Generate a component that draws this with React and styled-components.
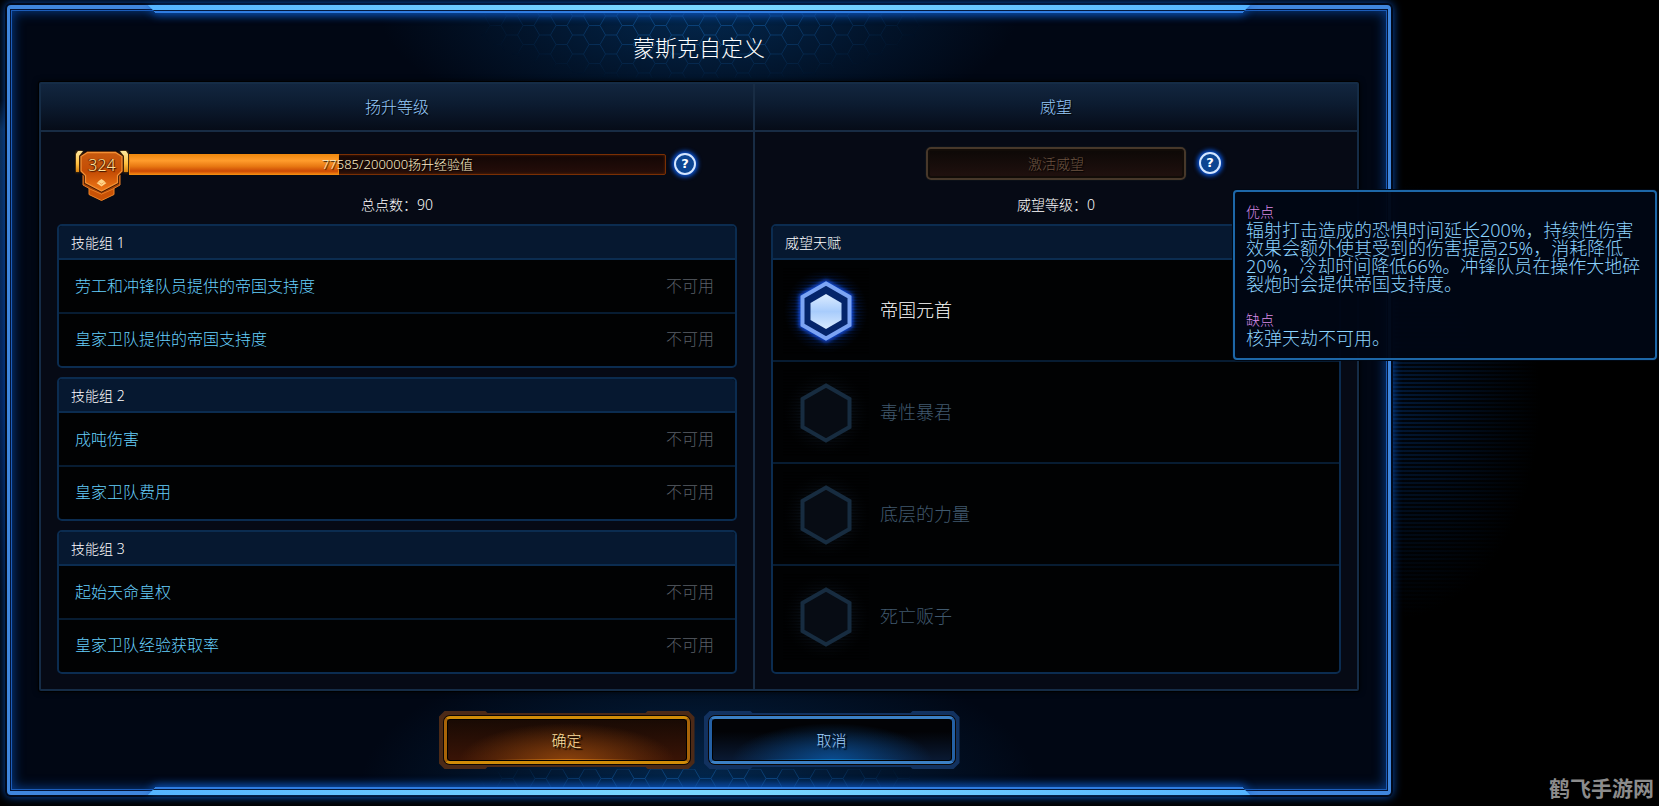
import React from 'react';
import styled, { createGlobalStyle, css } from 'styled-components';

const GlobalStyle = createGlobalStyle`
* {
  box-sizing: border-box;
}
body {
  margin: 0;
  background: #000;
  font-family: "Noto Sans", "Noto Sans CJK SC", sans-serif;
  font-weight: 300;
  color: #fff;
}
h1, h2, h3, p, ul {
  margin: 0;
  padding: 0;
  font-weight: 300;
}
button {
  font-family: inherit;
  font-weight: inherit;
  cursor: pointer;
}
`;

const Page = styled.div`
position: relative;
min-height: 100vh;
padding: 5px 268px 11px 7px;
overflow: hidden;
background:
  linear-gradient(180deg, transparent 100px, rgba(18, 62, 110, 0.7) 130px, rgba(4, 30, 80, 0.9) 400px, transparent 600px) 0 0 / 7px 100% no-repeat,
  repeating-linear-gradient(180deg, rgba(0, 0, 0, 0.8) 0 2px, transparent 2px 4px),
  radial-gradient(ellipse 150px 220px at 1390px 400px, #021a3a, #000 100%);
`;

const Dialog = styled.main`
position: relative;
border: 3px solid #3f86dd;
border-width: 4px 3px;
border-radius: 4px;
background:
  radial-gradient(ellipse 320px 130px at 50% 0, #03284f, rgba(2, 24, 50, 0.7) 60%, transparent),
  radial-gradient(ellipse 340px 150px at 50% 100%, #03284f, rgba(2, 24, 50, 0.7) 60%, transparent),
  #010714;
box-shadow:
  0 0 0 2px #010a1c,
  0 0 10px 2px #0648a8,
  inset 0 0 0 1px #031436,
  inset 0 0 0 2px #1c5cb8,
  inset 0 0 12px 3px #063a86;
`;

const Rail = styled.div`
position: absolute;
left: 10%;
right: 10%;
${({ $bottom }) => ($bottom ? 'bottom: -4px; transform: scaleY(-1);' : 'top: -4px;')}
height: 8px;
filter: drop-shadow(0 2px 4px #0a50b4);

&::before {
  content: '';
  display: block;
  height: 8px;
  background:
    linear-gradient(180deg, transparent 5px, #04183c 5px 6px, #2f7ce0 6px),
    linear-gradient(90deg, #54b4ff, #78d6ff 45%, #78d6ff 55%, #54b4ff);
  clip-path: polygon(0 0, 100% 0, calc(100% - 8px) 100%, 8px 100%);
}
`;

const HexField = styled.svg`
position: absolute;
left: 50%;
margin-left: -231px;
width: 462px;
height: ${({ $bottom }) => ($bottom ? '20px' : '66px')};
${({ $bottom }) => ($bottom ? 'bottom: 2px;' : 'top: 3px;')}
mask-image: ${({ $bottom }) => ($bottom
    ? 'radial-gradient(ellipse 50% 200% at 50% 100%, rgba(0, 0, 0, 0.8) 40%, transparent)'
    : 'radial-gradient(ellipse 50% 110% at 50% 0, rgba(0, 0, 0, 0.8) 30%, transparent)')};
`;

const Title = styled.h1`
position: relative;
height: 73px;
display: flex;
justify-content: center;
align-items: center;
font-size: 22px;
color: #fff;
`;

const Panel = styled.div`
position: relative;
display: grid;
grid-template-columns: 712fr 604fr;
margin: 0 29px;
border: 2px solid #152c46;
border-radius: 2px;
background: #060a15;
box-shadow: 0 0 0 1px #000, 0 0 6px #000;
`;

const Column = styled.section`
padding-bottom: 15px;

& + & {
  border-left: 2px solid #182c44;
}
`;

const ColumnTitle = styled.h2`
height: 48px;
padding-bottom: 2px;
display: flex;
justify-content: center;
align-items: center;
border-bottom: 2px solid #182c44;
background: linear-gradient(180deg, #12263f, #0c1b30 45%, #060c18);
font-size: 16px;
color: #94c8f8;
text-shadow: 1px 1px 1px #000;
`;

const LevelRow = styled.div`
display: flex;
align-items: center;
height: 64px;
padding: 0 57px 0 34px;
`;

const PrestigeRow = styled.div`
display: grid;
grid-template-columns: 1fr auto 1fr;
align-items: center;
gap: 13px;
height: 62px;
margin-bottom: 2px;
`;

const BadgeBox = styled.div`
display: grid;
align-self: flex-start;
flex: none;
width: 54px;
height: 52px;
margin-top: 18px;

> * {
  grid-area: 1 / 1;
}
`;

const BadgeLevel = styled.span`
position: relative;
font-size: 16px;
line-height: 30px;
text-align: center;
color: #ffe09a;
text-shadow: 1px 1px 1px #3a1200, -1px 0 1px #3a1200;
`;

const XpBar = styled.div`
position: relative;
flex: 1;
height: 21px;
margin-right: 8px;
border: 1px solid #7a2f04;
border-radius: 2px;
background: linear-gradient(180deg, #120605, #260e0a);
box-shadow: inset 0 0 3px #5a2204;
`;

const XpFill = styled.div`
height: 100%;
background: linear-gradient(180deg, #f08a10, #ff9c2c 30%, #e87812 60%, #cc4a04 85%, #f08010);
box-shadow: 0 0 0 1px #f08a10;
`;

const XpText = styled.span`
position: absolute;
inset: 0;
font-size: 13px;
line-height: 18px;
text-align: center;
color: #fff0c8;
text-shadow: 1px 1px 1px #000;
`;

const HelpButton = styled.button`
flex: none;
width: 22px;
height: 22px;
padding: 0;
border: 2px solid #d4e6ff;
border-radius: 50%;
background: #0c4592;
box-shadow: 0 0 4px 2px #0a55d8;
font-family: "DejaVu Sans", sans-serif;
font-size: 13px;
font-weight: 700;
line-height: 18px;
color: #fff;
`;

const PrestigeButton = styled.button`
grid-column: 2;
width: 260px;
height: 33px;
padding: 0;
border: 2px solid #47382a;
border-radius: 5px;
background: linear-gradient(180deg, #0c0806, #21110f);
box-shadow: 0 0 0 1px #0b1018, inset 0 0 0 2px #120c08;
font-size: 14px;
color: #6c5340;
text-shadow: 1px 1px 1px #000;
`;

const Points = styled.p`
margin-bottom: 10px;
font-size: 14px;
line-height: 18px;
text-align: center;
`;

const Groups = styled.div`
display: flex;
flex-direction: column;
gap: 9px;
padding: 0 16px;
`;

const Card = styled.div`
position: relative;
border: 2px solid #0b2c50;
border-radius: 5px;
background: #010203;
`;

const CardTitle = styled.h3`
height: 34px;
padding: 0 12px;
border-bottom: 2px solid #0b2c50;
border-radius: 3px 3px 0 0;
background: #061830;
font-size: 14px;
line-height: 34px;
`;

const SkillList = styled.ul`
list-style: none;
padding-bottom: 2px;
`;

const Skill = styled.li`
display: flex;
justify-content: space-between;
align-items: center;
height: 52px;
padding: 0 21px 2px 16px;
font-size: 16px;
color: #66d0fc;

& + & {
  border-top: 2px solid #071c32;
}
`;

const SkillState = styled.span`
color: #5a6068;
`;

const TalentList = styled.ul`
list-style: none;
padding-bottom: 6px;
`;

const Talent = styled.li`
display: flex;
align-items: center;
gap: 11px;
height: 102px;
padding: 2px 0 0 10px;
border-bottom: 2px solid #071c32;
font-size: 18px;
color: ${({ $active }) => ($active ? '#fff' : '#40596e')};

&:last-child {
  height: 100px;
  border-bottom: none;
}
`;

const TalentName = styled.span`
padding-bottom: 5px;
`;

const HexIcon = styled.svg`
flex: none;
width: 86px;
height: 86px;
`;

const Tooltip = styled.div`
position: absolute;
z-index: 5;
top: -36px;
right: -318px;
width: 424px;
height: 170px;
padding: 11px 7px 0 11px;
border: 2px solid #1d67a8;
border-radius: 4px;
background: rgba(0, 6, 20, 0.96);
box-shadow: 0 0 0 1px #000814;
font-size: 18px;
line-height: 18px;
color: #8cd4ff;

p + h4 {
  margin-top: 18px;
}
`;

const TooltipLabel = styled.h4`
margin: 0;
font-size: 14px;
font-weight: 300;
line-height: 18px;
color: #dc8ce8;
`;

const Actions = styled.div`
position: relative;
display: flex;
justify-content: center;
gap: 9px;
padding: 20px 0 22px;
`;

const blueSkin = css`
background: #123260;
color: #a0d0ff;

span {
  border-color: #3c80c4 #2460a4;
  background:
    linear-gradient(90deg, transparent 20%, #0a70b8 50%, transparent 80%) 0 100% / 100% 2px no-repeat,
    radial-gradient(ellipse 42% 90% at 50% 100%, #0a4c90, transparent),
    linear-gradient(180deg, #020306 30%, #0a1a34);
}
`;

const goldSkin = css`
background: #4c2a17;
color: #ffe0a0;

span {
  border-color: #d08c08 #a86408;
  background:
    linear-gradient(90deg, transparent 20%, #c87010 50%, transparent 80%) 0 100% / 100% 2px no-repeat,
    radial-gradient(ellipse 45% 90% at 50% 100%, #8a420c, transparent),
    linear-gradient(180deg, #180a04, #3a1406);
}
`;

const ActionButton = styled.button`
width: 256px;
height: 58px;
padding: 5px;
border: none;
font-size: 15px;
text-shadow: 2px 2px 1px #000;
clip-path: polygon(
  6px 0, 47px 0, 49px 2px, calc(100% - 49px) 2px, calc(100% - 47px) 0, calc(100% - 6px) 0,
  100% 6px, 100% calc(100% - 6px),
  calc(100% - 6px) 100%, calc(100% - 47px) 100%, calc(100% - 49px) calc(100% - 2px),
  49px calc(100% - 2px), 47px 100%, 6px 100%, 0 calc(100% - 6px), 0 6px
);

span {
  display: flex;
  justify-content: center;
  align-items: center;
  height: 100%;
  padding-bottom: 2px;
  border-width: 3px;
  border-style: solid;
  border-radius: 6px;
  box-shadow: 0 0 0 1px #0c0604, inset 0 0 0 1px #000;
}

${({ $primary }) => ($primary ? goldSkin : blueSkin)}
`;

const Watermark = styled.div`
position: absolute;
right: 5px;
bottom: 7px;
font-family: "Noto Sans CJK SC", sans-serif;
font-size: 21px;
font-weight: 700;
line-height: 24px;
color: #8c8c8c;
`;

const groups = [
  { name: '技能组 1', skills: ['劳工和冲锋队员提供的帝国支持度', '皇家卫队提供的帝国支持度'] },
  { name: '技能组 2', skills: ['成吨伤害', '皇家卫队费用'] },
  { name: '技能组 3', skills: ['起始天命皇权', '皇家卫队经验获取率'] },
];

const talents = ['帝国元首', '毒性暴君', '底层的力量', '死亡贩子'];

const xp = 77585;
const xpMax = 200000;

const HexPattern = ({ bottom }) => {
  const id = bottom ? 'hexBottom' : 'hexTop';
  return (
    <HexField $bottom={bottom} aria-hidden="true">
      <defs>
        <pattern id={id} width="33" height="19" patternUnits="userSpaceOnUse" x={bottom ? 12 : 0} y={bottom ? 0 : 4}>
          <path d="M0 9.5 5.5 0H16.5L22 9.5 16.5 19H5.5ZM22 9.5H33" fill="none" stroke="#0e4a86" strokeWidth="1" />
        </pattern>
      </defs>
      <rect width="100%" height="100%" fill={`url(#${id})`} />
    </HexField>
  );
};

const Badge = ({ level }) => (
  <BadgeBox>
    <svg width="54" height="52" viewBox="0 0 54 52" aria-hidden="true">
      <defs>
        <linearGradient id="wing" x1="0" y1="0" x2="0" y2="1">
          <stop offset="0" stopColor="#ffe9a0" />
          <stop offset="0.6" stopColor="#ffc040" />
          <stop offset="1" stopColor="#d88410" />
        </linearGradient>
        <linearGradient id="shield" x1="0" y1="0" x2="0" y2="1">
          <stop offset="0" stopColor="#c85a10" />
          <stop offset="0.5" stopColor="#c44c04" />
          <stop offset="1" stopColor="#f07818" />
        </linearGradient>
        <filter id="wingGlow" x="-50%" y="-50%" width="200%" height="200%">
          <feGaussianBlur stdDeviation="1.5" />
        </filter>
      </defs>
      <g fill="#b86a10" filter="url(#wingGlow)">
        <path d="M8 1H3L1 4V22H4V6Z" />
        <path d="M45 1H51L53 4V22H49V6Z" />
      </g>
      <path d="M8 1H3L1 4V22H4V6Z" fill="url(#wing)" />
      <path d="M45 1H51L53 4V22H49V6Z" fill="url(#wing)" />
      <path d="M14 38V44.500L26.500 50.500 39 44.500V38L26.500 44Z" fill="#c85206" stroke="#ef8426" strokeWidth="1" />
      <path d="M8 25V35L16 39.500 26.500 44 37 39.500 45 35V25Z" fill="#a44408" stroke="#e87c24" strokeWidth="1" />
      <path d="M12.500 2.500H40.500L47 6.500V21L42.500 25.500V32.500L26.500 41 10.500 32.500V25.500L6 21V6.500Z" fill="url(#shield)" stroke="#3a1400" strokeWidth="3" />
      <path d="M12.500 2.500H40.500L47 6.500V21L42.500 25.500V32.500L26.500 41 10.500 32.500V25.500L6 21V6.500Z" fill="url(#shield)" stroke="#f49034" strokeWidth="1.300" />
      <path d="M26.500 29 30 31.500 26.500 34 23 31.500ZM21.500 33 23.500 32 26.500 34.500 29.500 32 31.500 33 26.500 36.500Z" fill="#ffd488" />
    </svg>
    <BadgeLevel>{level}</BadgeLevel>
  </BadgeBox>
);

const TalentIcon = ({ active }) => (
  <HexIcon viewBox="0 0 86 86" aria-hidden="true">
    <defs>
      <radialGradient id="halo">
        <stop offset="0.4" stopColor="#0a48d0" />
        <stop offset="0.7" stopColor="#04246c" stopOpacity="0.6" />
        <stop offset="1" stopColor="#021030" stopOpacity="0" />
      </radialGradient>
      <radialGradient id="haloOff">
        <stop offset="0.5" stopColor="#0a1018" />
        <stop offset="1" stopColor="#05080c" stopOpacity="0" />
      </radialGradient>
      <linearGradient id="core" x1="0" y1="0" x2="0" y2="1">
        <stop offset="0" stopColor="#dcecff" />
        <stop offset="0.5" stopColor="#a8ccfc" />
        <stop offset="1" stopColor="#d8eaff" />
      </linearGradient>
      <pattern id="scan" width="4" height="3" patternUnits="userSpaceOnUse">
        <rect width="4" height="1.500" fill="#000" opacity="0.6" />
      </pattern>
      <filter id="ringGlow" x="-30%" y="-30%" width="160%" height="160%">
        <feGaussianBlur stdDeviation="2" />
      </filter>
    </defs>
    <circle cx="43" cy="43" r="42" fill={active ? 'url(#halo)' : 'url(#haloOff)'} />
    <rect width="86" height="86" fill="url(#scan)" />
    {active && (
      <path d="M43 15.500 66.500 29V57L43 70.500 19.500 57V29Z" fill="none" stroke="#1450e8" strokeWidth="7" filter="url(#ringGlow)" />
    )}
    <path
      d="M43 15.500 66.500 29V57L43 70.500 19.500 57V29Z"
      fill={active ? '#04246a' : '#070c14'}
      stroke={active ? '#7ca4f4' : '#172c40'}
      strokeWidth="4"
    />
    {active && <path d="M43 26 58.500 35V52L43 61 27.500 52V35Z" fill="url(#core)" />}
  </HexIcon>
);

const App = () => {
  return (
    <>
      <GlobalStyle />
      <Page>
        <Dialog>
          <HexPattern />
          <HexPattern bottom />
          <Rail />
          <Rail $bottom />
          <Title>蒙斯克自定义</Title>
          <Panel>
            <Column>
              <ColumnTitle>扬升等级</ColumnTitle>
              <LevelRow>
                <Badge level={324} />
                <XpBar>
                  <XpFill style={{ width: `${(xp / xpMax) * 100}%` }} />
                  <XpText>{xp}/{xpMax}扬升经验值</XpText>
                </XpBar>
                <HelpButton>?</HelpButton>
              </LevelRow>
              <Points>总点数：90</Points>
              <Groups>
                {groups.map((group) => (
                  <Card key={group.name}>
                    <CardTitle>{group.name}</CardTitle>
                    <SkillList>
                      {group.skills.map((skill) => (
                        <Skill key={skill}>
                          {skill}
                          <SkillState>不可用</SkillState>
                        </Skill>
                      ))}
                    </SkillList>
                  </Card>
                ))}
              </Groups>
            </Column>
            <Column>
              <ColumnTitle>威望</ColumnTitle>
              <PrestigeRow>
                <PrestigeButton disabled>激活威望</PrestigeButton>
                <HelpButton>?</HelpButton>
              </PrestigeRow>
              <Points>威望等级：0</Points>
              <Groups>
                <Card>
                  <CardTitle>威望天赋</CardTitle>
                  <TalentList>
                    {talents.map((talent, i) => (
                      <Talent key={talent} $active={i === 0}>
                        <TalentIcon active={i === 0} />
                        <TalentName>{talent}</TalentName>
                      </Talent>
                    ))}
                  </TalentList>
                  <Tooltip role="tooltip">
                    <TooltipLabel>优点</TooltipLabel>
                    <p>辐射打击造成的恐惧时间延长200%，持续性伤害效果会额外使其受到的伤害提高25%，消耗降低20%，冷却时间降低66%。冲锋队员在操作大地碎裂炮时会提供帝国支持度。</p>
                    <TooltipLabel>缺点</TooltipLabel>
                    <p>核弹天劫不可用。</p>
                  </Tooltip>
                </Card>
              </Groups>
            </Column>
          </Panel>
          <Actions>
            <ActionButton $primary><span>确定</span></ActionButton>
            <ActionButton><span>取消</span></ActionButton>
          </Actions>
        </Dialog>
        <Watermark>鹤飞手游网</Watermark>
      </Page>
    </>
  );
};

export default App;
